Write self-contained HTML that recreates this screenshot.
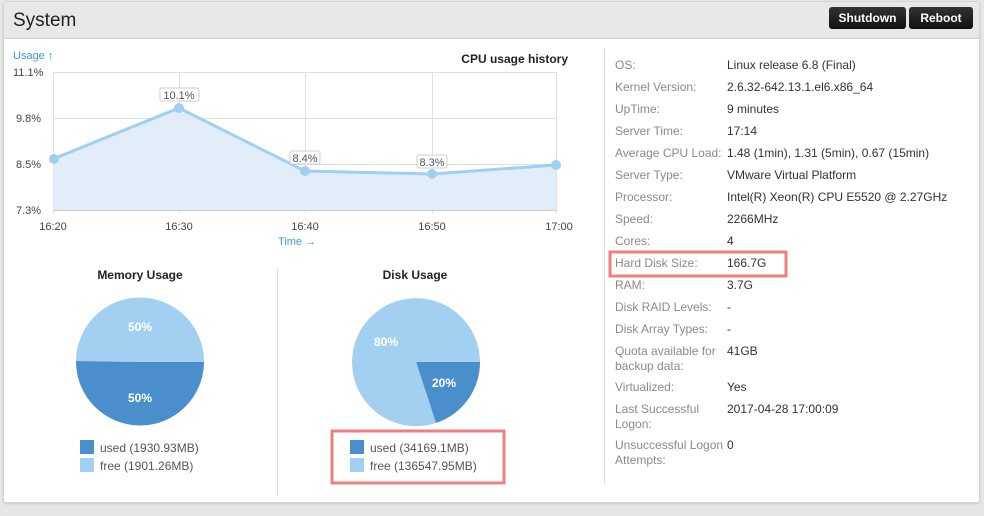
<!DOCTYPE html>
<html><head><meta charset="utf-8"><style>
*{margin:0;padding:0;box-sizing:border-box}
body{width:984px;height:516px;background:#e6e6e6;font-family:"Liberation Sans",Arial,sans-serif;position:relative;overflow:hidden}
.panel{position:absolute;left:3px;top:1px;width:977px;height:502px;background:#fff;border:1px solid #d4d4d4;border-radius:3px;box-shadow:0 1px 2px rgba(0,0,0,.12)}
.hdr{position:absolute;left:0;top:0;right:0;height:37px;background:#e8e8e8;border-bottom:1px solid #cfcfcf}
.hdr h1{position:absolute;left:9px;top:8px;font-size:19px;font-weight:normal;color:#222}
.btn{position:absolute;top:5px;height:22px;background:linear-gradient(#333,#111);color:#fff;font-size:12px;font-weight:bold;line-height:22px;text-align:center;border-radius:3px}
.a{position:absolute;font-size:12px;white-space:nowrap;margin-top:1px}
.l{color:#8a8a8a;left:615px;line-height:15px}
.v{color:#333;left:727px}
</style></head><body>
<div class="panel">
<div class="hdr"><h1>System</h1>
<div class="btn" style="left:825px;width:77px">Shutdown</div>
<div class="btn" style="left:905px;width:64px">Reboot</div></div>
</div>
<div style="position:absolute;left:604px;top:48px;width:1px;height:436px;background:#ddd"></div>
<div style="position:absolute;left:277px;top:268px;width:1px;height:229px;background:#ddd"></div>
<svg style="position:absolute;left:0;top:0" width="984" height="516" font-family="Liberation Sans, Arial, sans-serif">
<g stroke="#e0e0e0" stroke-width="1">
<line x1="53" y1="72.5" x2="556" y2="72.5"/><line x1="53" y1="118.5" x2="556" y2="118.5"/><line x1="53" y1="164.5" x2="556" y2="164.5"/>
<line x1="53.5" y1="72" x2="53.5" y2="214"/><line x1="179.5" y1="72" x2="179.5" y2="214"/><line x1="305.5" y1="72" x2="305.5" y2="214"/><line x1="432.5" y1="72" x2="432.5" y2="214"/><line x1="556.5" y1="72" x2="556.5" y2="214"/>
</g>
<polygon points="53,159 179,108 305,171 432,174 556,165 556,210 53,210" fill="#e1eef9"/>
<line x1="53" y1="210.5" x2="556" y2="210.5" stroke="#ccc"/>
<polyline points="53,159 179,108 305,171 432,174 556,165" fill="none" stroke="#a0cfef" stroke-width="3"/>
<g fill="#a0cfef"><circle cx="54" cy="159" r="5"/><circle cx="179" cy="108" r="5"/><circle cx="305" cy="171" r="5"/><circle cx="432" cy="174" r="5"/><circle cx="556" cy="165" r="5"/></g>
<g font-size="11" fill="#555"><rect x="160" y="88" width="39" height="13" fill="#fff" stroke="#ccc" rx="2"/><text x="179" y="99" text-anchor="middle">10.1%</text>
<rect x="290" y="151" width="30" height="13" fill="#fff" stroke="#ccc" rx="2"/><text x="305" y="162" text-anchor="middle">8.4%</text>
<rect x="417" y="155" width="30" height="13" fill="#fff" stroke="#ccc" rx="2"/><text x="432" y="166" text-anchor="middle">8.3%</text></g>
<g font-size="11" fill="#444"><text x="13" y="76">11.1%</text><text x="16" y="122">9.8%</text><text x="16" y="168">8.5%</text><text x="16" y="214">7.3%</text>
<text x="53" y="230" text-anchor="middle">16:20</text><text x="179" y="230" text-anchor="middle">16:30</text><text x="305" y="230" text-anchor="middle">16:40</text><text x="432" y="230" text-anchor="middle">16:50</text><text x="559" y="230" text-anchor="middle">17:00</text></g>
<text x="13" y="59" font-size="11" fill="#3a9ad9">Usage ↑</text>
<text x="297" y="245" font-size="11" fill="#3a9ad9" text-anchor="middle">Time →</text>
<text x="568" y="63" font-size="12" font-weight="bold" fill="#222" text-anchor="end">CPU usage history</text>
<text x="140" y="279" font-size="12" font-weight="bold" fill="#222" text-anchor="middle">Memory Usage</text>
<text x="415" y="279" font-size="12" font-weight="bold" fill="#222" text-anchor="middle">Disk Usage</text>
<path d="M140,362 L76,361 A64,64 0 0 1 204,362 Z" fill="#a3d0f0"/>
<path d="M140,362 L204,362 A64,64 0 0 1 76,361 Z" fill="#4a8fcc"/>
<path d="M416,362 L480,362 A64,64 0 0 1 436,423 Z" fill="#4a8fcc"/>
<path d="M416,362 L436,423 A64,64 0 1 1 480,362 Z" fill="#a3d0f0"/>
<g font-size="12" font-weight="bold" fill="#fff"><text x="140" y="331" text-anchor="middle">50%</text><text x="140" y="402" text-anchor="middle">50%</text><text x="386" y="346" text-anchor="middle">80%</text><text x="444" y="387" text-anchor="middle">20%</text></g>
<rect x="80" y="440" width="14" height="14" fill="#4a8fcc"/><rect x="80" y="458" width="14" height="14" fill="#a3d0f0"/>
<rect x="350" y="440" width="14" height="14" fill="#4a8fcc"/><rect x="350" y="458" width="14" height="14" fill="#a3d0f0"/>
<g font-size="12" fill="#555"><text x="100" y="452">used (1930.93MB)</text><text x="100" y="470">free (1901.26MB)</text>
<text x="370" y="452">used (34169.1MB)</text><text x="370" y="470">free (136547.95MB)</text></g>
<rect x="332" y="431" width="172" height="52" fill="none" stroke="#f08080" stroke-width="3"/>
<rect x="610" y="252" width="176" height="24" fill="none" stroke="#f08080" stroke-width="3"/>
</svg>
<div class="a l" style="top:57px">OS:</div><div class="a v" style="top:57px">Linux release 6.8 (Final)</div>
<div class="a l" style="top:79px">Kernel Version:</div><div class="a v" style="top:79px">2.6.32-642.13.1.el6.x86_64</div>
<div class="a l" style="top:101px">UpTime:</div><div class="a v" style="top:101px">9 minutes</div>
<div class="a l" style="top:123px">Server Time:</div><div class="a v" style="top:123px">17:14</div>
<div class="a l" style="top:145px">Average CPU Load:</div><div class="a v" style="top:145px">1.48 (1min), 1.31 (5min), 0.67 (15min)</div>
<div class="a l" style="top:167px">Server Type:</div><div class="a v" style="top:167px">VMware Virtual Platform</div>
<div class="a l" style="top:189px">Processor:</div><div class="a v" style="top:189px">Intel(R) Xeon(R) CPU E5520 @ 2.27GHz</div>
<div class="a l" style="top:211px">Speed:</div><div class="a v" style="top:211px">2266MHz</div>
<div class="a l" style="top:233px">Cores:</div><div class="a v" style="top:233px">4</div>
<div class="a l" style="top:255px">Hard Disk Size:</div><div class="a v" style="top:255px">166.7G</div>
<div class="a l" style="top:277px">RAM:</div><div class="a v" style="top:277px">3.7G</div>
<div class="a l" style="top:299px">Disk RAID Levels:</div><div class="a v" style="top:299px">-</div>
<div class="a l" style="top:321px">Disk Array Types:</div><div class="a v" style="top:321px">-</div>
<div class="a l" style="top:343px">Quota available for<br>backup data:</div><div class="a v" style="top:343px">41GB</div>
<div class="a l" style="top:379px">Virtualized:</div><div class="a v" style="top:379px">Yes</div>
<div class="a l" style="top:401px">Last Successful<br>Logon:</div><div class="a v" style="top:401px">2017-04-28 17:00:09</div>
<div class="a l" style="top:437px">Unsuccessful Logon<br>Attempts:</div><div class="a v" style="top:437px">0</div>
</body></html>
